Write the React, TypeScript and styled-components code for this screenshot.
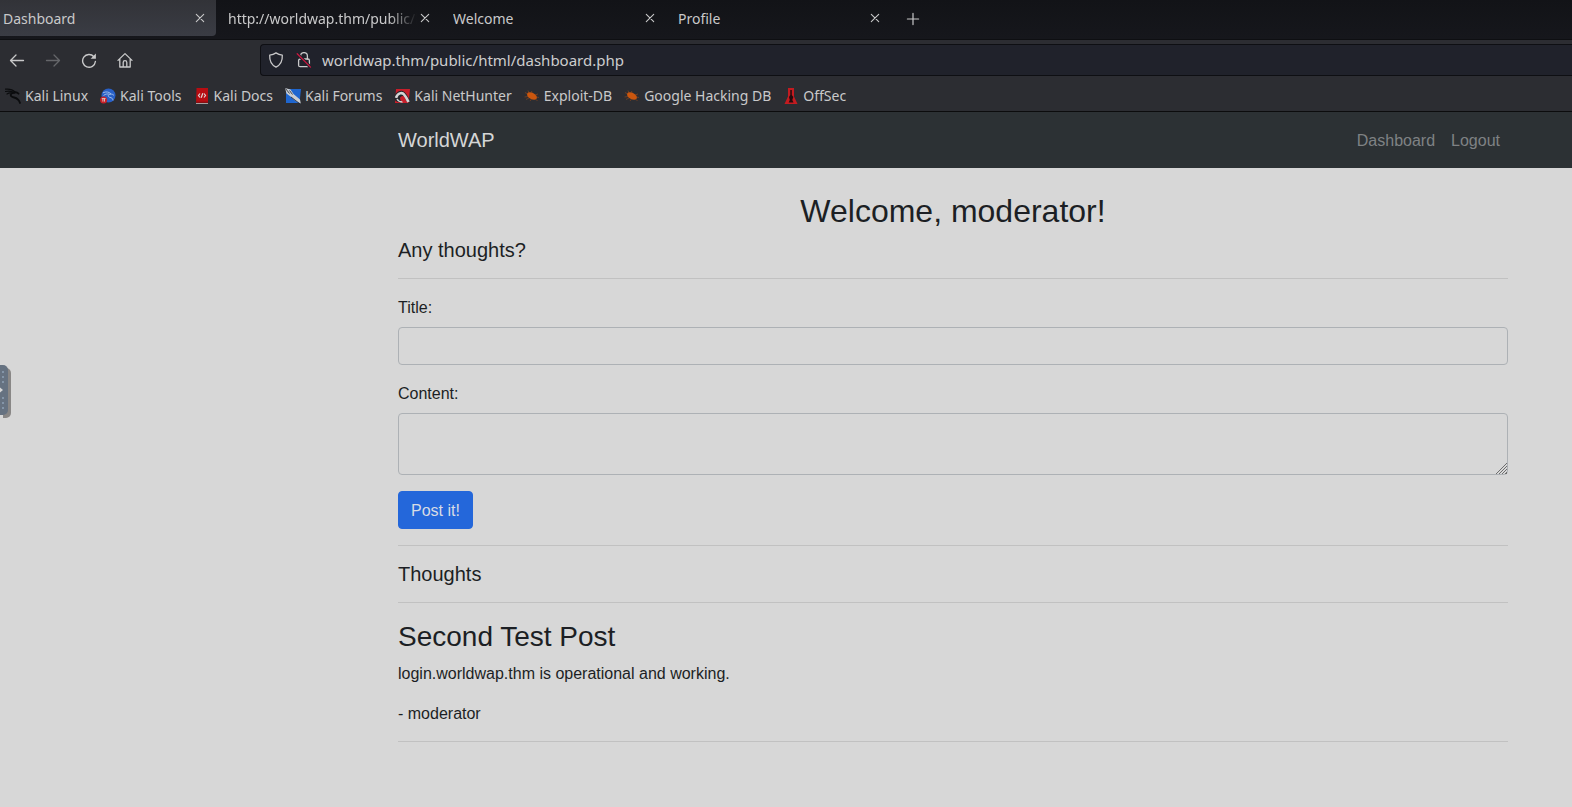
import React from 'react';
import styled, { createGlobalStyle } from 'styled-components';

const ui = '"Noto Sans", sans-serif';
const page = '"Liberation Sans", Arial, sans-serif';

const GlobalStyle = createGlobalStyle`
  *, *::before, *::after { box-sizing: border-box; }
  html, body, #root { min-height: 100vh; }
  body { margin: 0; background: #d7d7d7; color: #1c1f24; font-family: ${page}; font-size: 16px; line-height: 26px; }
  svg { display: block; flex: none; }
`;

const Shell = styled.div`
  position: relative;
  min-height: 100vh;
  overflow: hidden;
`;

const Chrome = styled.header`
  font-family: ${ui};
  font-size: 14px;
  line-height: 20px;
  color: #c9c9ca;
  background: #2c2d32;
  border-bottom: 1px solid #0c0c0d;
`;

const TabStrip = styled.div`
  display: flex;
  align-items: flex-start;
  height: 40px;
  background: linear-gradient(#121317, #16171c);
  border-bottom: 1px solid #0e0f12;
`;

const Tab = styled.div<{ $active?: boolean }>`
  display: flex;
  align-items: center;
  width: ${p => (p.$active ? 216 : 225)}px;
  height: 36px;
  padding: 0 8px 0 ${p => (p.$active ? 3 : 12)}px;
  background: ${p => (p.$active ? 'linear-gradient(#323338, #3a3c44)' : 'transparent')};
  border-radius: 0 0 4px 0;
`;

const TabTitle = styled.span<{ $fade?: boolean }>`
  flex: 1;
  min-width: 0;
  padding-top: 2px;
  overflow: hidden;
  white-space: nowrap;
  ${p => p.$fade && 'mask-image: linear-gradient(to left, transparent, #000 28px);'}
`;

const IconButton = styled.button<{ $size?: number; $dim?: boolean }>`
  display: flex;
  align-items: center;
  justify-content: center;
  flex: none;
  width: ${p => p.$size || 16}px;
  height: ${p => p.$size || 16}px;
  padding: 0;
  border: 0;
  background: none;
  color: ${p => (p.$dim ? '#65666a' : '#c9c9ca')};
`;

const NewTab = styled.div`
  display: flex;
  align-items: center;
  height: 37px;
  padding-left: 14px;
`;

const Toolbar = styled.div`
  display: flex;
  align-items: center;
  height: 40px;
`;

const NavButtons = styled.div`
  display: flex;
  gap: 4px;
  width: 260px;
  padding-left: 1px;
`;

const AddressBar = styled.div`
  display: flex;
  align-items: center;
  gap: 12px;
  flex: 1;
  height: 32px;
  padding-left: 7px;
  background: #20222b;
  border: 1px solid #0e0f13;
  border-right: 0;
  border-radius: 4px 0 0 4px;
`;

const Address = styled.input`
  flex: 1;
  min-width: 0;
  margin-left: -2px;
  padding: 0;
  border: 0;
  outline: 0;
  background: none;
  color: #cdcdce;
  font: 15px/20px ${ui};
`;

const Bookmarks = styled.nav`
  display: flex;
  align-items: center;
  gap: 12px;
  height: 31px;
  padding-left: 5px;
`;

const Bookmark = styled.a`
  display: flex;
  align-items: center;
  gap: 4px;
  color: inherit;
  text-decoration: none;
  white-space: nowrap;
`;

const SiteNav = styled.nav`
  height: 56px;
  padding: 0 64px 0 398px;
  display: flex;
  align-items: center;
  justify-content: space-between;
  background: #2c3134;
`;

const Brand = styled.a`
  color: #d5d6d6;
  font-size: 20px;
  line-height: 30px;
  text-decoration: none;
`;

const NavLinks = styled.div`
  display: flex;
`;

const NavLink = styled.a`
  padding: 10px 8px 8px;
  color: #7f8284;
  text-decoration: none;
`;

const Main = styled.main`
  padding: 24px 64px 48px 398px;
`;

const Welcome = styled.h2`
  margin: 0 0 8px;
  font-weight: 400;
  font-size: 32px;
  line-height: 38px;
  text-align: center;
`;

const SectionTitle = styled.h5`
  margin: 0;
  font-weight: 400;
  font-size: 20px;
  line-height: 24px;
`;

const Rule = styled.hr`
  height: 1px;
  margin: 16px 0;
  border: 0;
  background: #c1c1c1;
`;

const Field = styled.div`
  display: flex;
  flex-direction: column;
  gap: 6px;
  margin-bottom: 16px;
`;

const controlStyle = `
  display: block;
  width: 100%;
  padding: 6px 12px;
  border: 1px solid #adb1b5;
  border-radius: 4px;
  outline: 0;
  background: #d7d7d7;
  color: #1c1f24;
  font: 16px/24px ${page};
`;
const TextInput = styled.input`${controlStyle} height: 38px;`;
const TextArea = styled.textarea`
  ${controlStyle}
  height: 62px;
  resize: vertical;
  &::-webkit-resizer {
    background: linear-gradient(135deg, transparent 52%, #6e6e6e 52% 57%, transparent 57% 65%, #6e6e6e 65% 70%, transparent 70% 78%, #6e6e6e 78% 83%, transparent 83% 90%, #6e6e6e 90%) right bottom / 12px 12px no-repeat;
  }
`;

const PostButton = styled.button`
  display: block;
  padding: 6px 12px 4px;
  border: 1px solid #2467da;
  border-radius: 4px;
  background: #2467da;
  color: #d7dce5;
  font: 16px/26px ${page};
`;

const Post = styled.article`
  display: grid;
  gap: 14px;
  padding-bottom: 14px;
  margin-bottom: -16px;
`;

const PostTitle = styled.h3`
  margin: 0 0 -8px;
  font-weight: 400;
  font-size: 28px;
  line-height: 36px;
`;

const Text = styled.p`
  margin: 0;
`;

const PanelHandle = styled.button`
  position: absolute;
  left: 0;
  top: 365px;
  width: 8px;
  height: 50px;
  padding: 0;
  border: 0;
  border-radius: 0 5px 5px 0;
  background: #667281;
  box-shadow: 3px 3px 0 #898786;
`;

const Close = () => (
  <svg width="16" height="16" viewBox="0 0 16 16" fill="none" stroke="currentColor" strokeWidth="1.1" strokeLinecap="round">
    <path d="M4.3 4.3l7.4 7.4M11.7 4.3l-7.4 7.4" />
  </svg>
);
const Plus = () => (
  <svg width="16" height="16" viewBox="0 0 16 16" fill="none" stroke="currentColor" strokeWidth="1.2" strokeLinecap="round">
    <path d="M8 2.4v11.2M2.4 8h11.2" />
  </svg>
);
const Arrow = ({ flip }: { flip?: boolean }) => (
  <svg width="16" height="16" viewBox="0 0 16 16" fill="none" stroke="currentColor" strokeWidth="1.3" strokeLinecap="round" strokeLinejoin="round">
    <path d={flip ? 'M1.5 8.500h13M9 3l5.500 5.500L9 14' : 'M14.5 8.500h-13M7 3L1.500 8.500 7 14'} />
  </svg>
);
const Reload = () => (
  <svg width="16" height="16" viewBox="0 0 16 16" fill="none" stroke="currentColor" strokeWidth="1.4" strokeLinecap="round">
    <path d="M12.9 4.700A6.4 6.4 0 1 0 14.400 9.500" />
    <path d="M14.900 1.500v5.300H9.600z" fill="currentColor" stroke="none" />
  </svg>
);
const Home = () => (
  <svg width="16" height="16" viewBox="0 0 16 16" fill="none" stroke="currentColor" strokeWidth="1.3" strokeLinejoin="round" strokeLinecap="round">
    <path d="M1 8.400l7-6.800 7 6.800M2.800 7V15h10.400V7M6.200 15v-4.500a1.800 1.800 0 0 1 3.600 0V15" />
  </svg>
);
const Shield = () => (
  <svg width="16" height="16" viewBox="0 0 16 16" fill="none" stroke="#c9c9ca" strokeWidth="1.3" strokeLinejoin="round">
    <path d="M8 .9c2 1.400 4 2 6.300 2.200.3 5.500-1.300 9.600-6.300 12C3 12.700 1.400 8.600 1.700 3.100 4 2.900 6 2.300 8 .9z" />
  </svg>
);
const BrokenLock = () => (
  <svg width="16" height="16" viewBox="0 0 16 16" fill="none" stroke="#c9c9ca" strokeWidth="1.3" strokeLinecap="round">
    <path d="M4.600 7V4a3.400 3.400 0 0 1 6.800 0v3" />
    <rect x="2.600" y="7" width="10.800" height="7.700" rx="1.500" />
    <path d="M1.500 2.200l13 13" stroke="#20222b" strokeWidth="3.200" />
    <path d="M1.200 1.800l13.300 13.300" stroke="#c8173f" />
  </svg>
);

const Dragon = () => (
  <svg width="16" height="16" viewBox="0 0 16 16" fill="none" stroke="#0b0c0e" strokeLinecap="round">
    <path d="M.5 1.200c4-.4 7.500.6 9.500 2.800M.5 3.500C4 2.600 7 3 9.800 5M2 6c2-1.200 4-1.200 5.500-.6" strokeWidth="1.2" />
    <path d="M9.500 4.500c1.500-.6 3 .2 4 1.200M9 4.800C5.500 4.800 4.800 7.600 7 8.800c2.500 1.300 6.300.2 8 6.200" strokeWidth="1.8" />
  </svg>
);
const Tools = () => (
  <svg width="16" height="16" viewBox="0 0 16 16" fill="none">
    <circle cx="8.500" cy="7.500" r="7" fill="#2860c8" />
    <path d="M3 4.800c3-1.500 6-1 8 1M3.500 7.500c2-1.800 4.500-1.800 6.500-1.200 2-.6 3 .2 4 1.200M9.500 6.400c-2 .6-1.500 2.600.5 3 1.800.4 2.800 1 3 3" stroke="#a8c3ea" strokeWidth=".9" />
    <circle cx="3.600" cy="12" r="3.500" fill="#c82028" />
    <path d="M1.800 10.600h3.800M2.900 10.600v3M4.500 10.600v3" stroke="#d7cfcf" strokeWidth=".9" />
  </svg>
);
const Docs = () => (
  <svg width="16" height="16" viewBox="0 0 16 16" fill="none">
    <path d="M2.500 0H14v16H2z" fill="#b70d12" />
    <path d="M2 14.800h12V16H2z" fill="#a6a0a0" />
    <path d="M2 13.800h12v1H2z" fill="#780a0e" />
    <path d="M6 5.500L4.500 7.500l1.500 2M10 5.500l1.500 2-1.500 2M8.800 5.200L7.200 9.800" stroke="#dfd5d5" strokeWidth="1.2" />
  </svg>
);
const Forums = () => (
  <svg width="16" height="16" viewBox="0 0 16 16" fill="none">
    <path d="M1 1h15l-1.500 14H1z" fill="#1f66cf" />
    <path d="M0 0l5.500 1.500L8.500 6l6.500 5.500.8 4L10.500 13 5.500 8.500 1.500 5.500z" fill="#c9cdd2" />
    <path d="M.5.5l4 5M6 9l8.500 6.500M4.500 2.500l3 4" stroke="#22252b" strokeWidth=".8" />
  </svg>
);
const NetHunter = () => (
  <svg width="16" height="16" viewBox="0 0 16 16" fill="none">
    <path d="M2 1h14l-1.500 14H1z" fill="#c71f2b" />
    <path d="M0 10C1 4 7 .5 11 4.500c2 2 4 5 5 10.500l-4-2c0-5-4-6.500-5.500-3.500-.8 1.500.3 3 1.500 5-4 0-7-1-8-4.500z" fill="#25262b" />
    <path d="M2 9.800C3.500 5 8 3.800 10.300 6.800c1.800 2 2.700 4 4.200 7.200" stroke="#d5d5d5" strokeWidth="2.600" />
    <path d="M3 11c1 2 3 3 5.500 3" stroke="#d5d5d5" strokeWidth="1.400" />
    <path d="M6.500 9c-.8 2 .5 3.500 3 5h2.500c-.5-2-1-4-2.500-5.500z" fill="#c71f2b" />
  </svg>
);
const Bug = () => (
  <svg width="16" height="16" viewBox="0 0 16 16" fill="none">
    <ellipse cx="8" cy="8" rx="5.400" ry="3.100" transform="rotate(28 8 8)" fill="#cb560e" />
    <path d="M4 6L1 4.500M5 5L4 2.500M8 5L7.500 3M4 8.500L.5 9M5 10l-3 1.500M7.500 11L6 13M11 7l3-1M12 9l3 .5M11.500 11l2 2" stroke="#a84c15" strokeWidth=".5" />
  </svg>
);
const OffSec = () => (
  <svg width="16" height="16" viewBox="0 0 16 16" fill="none">
    <path d="M5 0h6v8.500l3.500 7.500H1.500L5 8.500z" fill="#c31b20" />
    <path d="M7.300 2h1.500v5l1.500 2-1 3 1.200 2.500H5.700L6.800 12 6 9l1.300-2z" fill="#240b0e" />
  </svg>
);

const tabs = ['Dashboard', 'http://worldwap.thm/public/h', 'Welcome', 'Profile'];
const bookmarks: [string, React.FC][] = [
  ['Kali Linux', Dragon],
  ['Kali Tools', Tools],
  ['Kali Docs', Docs],
  ['Kali Forums', Forums],
  ['Kali NetHunter', NetHunter],
  ['Exploit-DB', Bug],
  ['Google Hacking DB', Bug],
  ['OffSec', OffSec],
];

export default function App() {
  return (
    <Shell>
      <GlobalStyle />
      <Chrome>
        <TabStrip>
          {tabs.map((title, i) => (
            <Tab key={title} $active={i === 0}>
              <TabTitle $fade={i === 1}>{title}</TabTitle>
              <IconButton aria-label={`Close ${title}`}><Close /></IconButton>
            </Tab>
          ))}
          <NewTab><IconButton aria-label="New tab"><Plus /></IconButton></NewTab>
        </TabStrip>
        <Toolbar>
          <NavButtons>
            <IconButton $size={32} aria-label="Back"><Arrow /></IconButton>
            <IconButton $size={32} $dim aria-label="Forward"><Arrow flip /></IconButton>
            <IconButton $size={32} aria-label="Reload"><Reload /></IconButton>
            <IconButton $size={32} aria-label="Home"><Home /></IconButton>
          </NavButtons>
          <AddressBar>
            <Shield />
            <BrokenLock />
            <Address aria-label="Address" defaultValue="worldwap.thm/public/html/dashboard.php" />
          </AddressBar>
        </Toolbar>
        <Bookmarks>
          {bookmarks.map(([name, Icon]) => (
            <Bookmark key={name} href="#"><Icon />{name}</Bookmark>
          ))}
        </Bookmarks>
      </Chrome>
      <SiteNav>
        <Brand href="#">WorldWAP</Brand>
        <NavLinks>
          <NavLink href="#">Dashboard</NavLink>
          <NavLink href="#">Logout</NavLink>
        </NavLinks>
      </SiteNav>
      <Main>
        <Welcome>Welcome, moderator!</Welcome>
        <SectionTitle>Any thoughts?</SectionTitle>
        <Rule />
        <form onSubmit={e => e.preventDefault()}>
          <Field>
            <label htmlFor="title">Title:</label>
            <TextInput id="title" />
          </Field>
          <Field>
            <label htmlFor="content">Content:</label>
            <TextArea id="content" />
          </Field>
          <PostButton type="submit">Post it!</PostButton>
        </form>
        <Rule />
        <SectionTitle>Thoughts</SectionTitle>
        <Rule />
        <Post>
          <PostTitle>Second Test Post</PostTitle>
          <Text>login.worldwap.thm is operational and working.</Text>
          <Text>- moderator</Text>
        </Post>
        <Rule />
      </Main>
      <PanelHandle aria-label="Open panel">
        <svg width="8" height="50" viewBox="0 0 8 50">
          <path d="M0 22.500L3 25 0 27.500z" fill="#d7d7d7" />
          <path d="M2 6h2v2H2zM2 11h2v2H2zM2 16h2v2H2zM2 32h2v2H2zM2 37h2v2H2zM2 42h2v2H2z" fill="#8495a8" />
        </svg>
      </PanelHandle>
    </Shell>
  );
}
